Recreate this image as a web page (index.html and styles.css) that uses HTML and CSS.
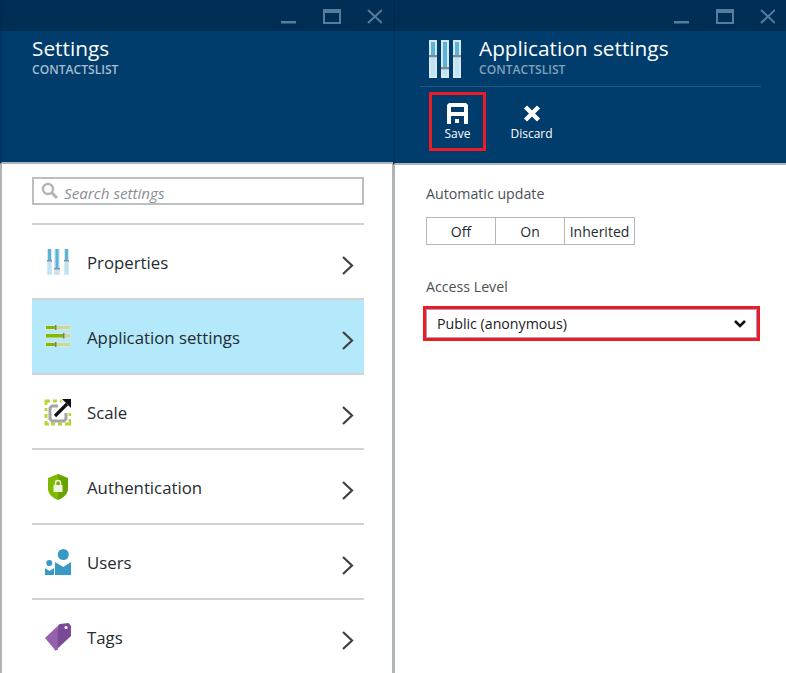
FILE: index.html
```html
<!DOCTYPE html>
<html lang="en">
<head>
  <meta charset="UTF-8" />
  <title>Settings</title>
  <link rel="stylesheet" href="styles.css">
</head>
<body>

<div class="blades">

  <!-- settings blade -->
  <section class="blade blade-left">
    <div class="titlebar">
      <svg class="winctl" width="101" height="17" viewBox="0 0 101 17">
        <rect x="0" y="13" width="15" height="2.500" fill="#587c9b"/>
        <path d="M43 2h16v13h-16z" fill="none" stroke="#587c9b" stroke-width="2"/>
        <rect x="42" y="1" width="18" height="4" fill="#587c9b"/>
        <path d="M87 2l14 13M101 2l-14 13" fill="none" stroke="#587c9b" stroke-width="2"/>
      </svg>
    </div>
    <header class="blade-head">
      <div class="head-text">
        <h1>Settings</h1>
        <p>CONTACTSLIST</p>
      </div>
    </header>
    <div class="blade-body">
      <div class="search">
        <svg width="18" height="18" viewBox="0 0 18 18">
          <circle cx="7" cy="7" r="5" fill="none" stroke="#b4b4b4" stroke-width="2.400"/>
          <path d="M10.500 10.500l5.500 5.500" stroke="#b4b4b4" stroke-width="3"/>
        </svg>
        <span>Search settings</span>
      </div>
      <ul class="menu">
        <li class="menu-item">
          <svg class="menu-icon" width="28" height="28" viewBox="0 0 28 28">
            <rect x="4" y="1" width="5" height="26" fill="#d6e8f0"/>
            <rect x="11" y="1" width="6" height="26" fill="#d6e8f0"/>
            <rect x="21" y="1" width="5" height="26" fill="#d6e8f0"/>
            <rect x="5" y="14" width="3" height="12" fill="#bfe3f2"/>
            <rect x="12.500" y="22" width="3" height="4" fill="#bfe3f2"/>
            <rect x="22" y="14" width="3" height="12" fill="#bfe3f2"/>
            <rect x="5" y="1" width="3" height="11" fill="#59b4d9"/>
            <rect x="12.500" y="1" width="3" height="19" fill="#59b4d9"/>
            <rect x="22" y="1" width="3" height="11" fill="#59b4d9"/>
            <rect x="4" y="12" width="5" height="1.500" fill="#8a8f94"/>
            <rect x="11" y="20" width="6" height="1.500" fill="#8a8f94"/>
            <rect x="21" y="12" width="5" height="1.500" fill="#8a8f94"/>
          </svg>
          <span>Properties</span>
          <svg class="chev" width="14" height="21" viewBox="0 0 14 21"><path d="M2 2l9 8.500-9 8.500" fill="none" stroke="#404040" stroke-width="2.200"/></svg>
        </li>
        <li class="menu-item selected">
          <svg class="menu-icon" width="28" height="28" viewBox="0 0 28 28">
            <rect x="2" y="2" width="26" height="5" fill="#dde3d6"/>
            <rect x="2" y="10" width="26" height="5.500" fill="#dde3d6"/>
            <rect x="2" y="19" width="26" height="5" fill="#dde3d6"/>
            <rect x="13" y="3" width="14" height="3" fill="#c5dc98"/>
            <rect x="22" y="11" width="5" height="3.500" fill="#c5dc98"/>
            <rect x="13" y="20" width="14" height="3" fill="#c5dc98"/>
            <rect x="3" y="3" width="9" height="3" fill="#7fba00"/>
            <rect x="3" y="11" width="17" height="3.500" fill="#7fba00"/>
            <rect x="3" y="20" width="9" height="3" fill="#7fba00"/>
            <rect x="12" y="2" width="1.500" height="5" fill="#7a7a7a"/>
            <rect x="20" y="10" width="1.500" height="5.500" fill="#7a7a7a"/>
            <rect x="12" y="19" width="1.500" height="5" fill="#7a7a7a"/>
          </svg>
          <span>Application settings</span>
          <svg class="chev" width="14" height="21" viewBox="0 0 14 21"><path d="M2 2l9 8.500-9 8.500" fill="none" stroke="#404040" stroke-width="2.200"/></svg>
        </li>
        <li class="menu-item">
          <svg class="menu-icon" width="28" height="28" viewBox="0 0 28 28">
            <path d="M3 7v-4h4M10 3h4M17 3h1M27 21v5h-5M19 26h-4M12 26h-4M6 26h-3v-3M3 20v-4M3 13v-3M27 18v-3" fill="none" stroke="#b8d432" stroke-width="2.800"/>
            <path d="M15 8h-6l-2 2v11l2 2h12l2-2v-6" fill="none" stroke="#a5a5a5" stroke-width="3"/>
            <path d="M12 18l12-12" stroke="#111" stroke-width="3.200"/>
            <path d="M19 1h10v10z" fill="#111"/>
          </svg>
          <span>Scale</span>
          <svg class="chev" width="14" height="21" viewBox="0 0 14 21"><path d="M2 2l9 8.500-9 8.500" fill="none" stroke="#404040" stroke-width="2.200"/></svg>
        </li>
        <li class="menu-item">
          <svg class="menu-icon" width="28" height="28" viewBox="0 0 28 28">
            <path d="M15 1l10 4v11c0 5-5 9-10 11z" fill="#68a300"/>
            <path d="M15 1l-10 4v11c0 5 5 9 10 11z" fill="#7fba00"/>
            <rect x="10.500" y="12" width="9" height="7" fill="#f0f5e0"/>
            <path d="M12.500 12v-2a2.500 2.500 0 0 1 5 0v2" fill="none" stroke="#f0f5e0" stroke-width="1.500"/>
          </svg>
          <span>Authentication</span>
          <svg class="chev" width="14" height="21" viewBox="0 0 14 21"><path d="M2 2l9 8.500-9 8.500" fill="none" stroke="#404040" stroke-width="2.200"/></svg>
        </li>
        <li class="menu-item">
          <svg class="menu-icon" width="28" height="28" viewBox="0 0 28 28">
            <circle cx="20.300" cy="6.500" r="5.500" fill="#3999c6"/>
            <path d="M12 14l8.300 5 7.700-5v13h-16z" fill="#3999c6"/>
            <circle cx="6.300" cy="15" r="3" fill="#3999c6"/>
            <path d="M2 20l4.300 3 4.700-3v7h-9z" fill="#3999c6"/>
          </svg>
          <span>Users</span>
          <svg class="chev" width="14" height="21" viewBox="0 0 14 21"><path d="M2 2l9 8.500-9 8.500" fill="none" stroke="#404040" stroke-width="2.200"/></svg>
        </li>
        <li class="menu-item">
          <svg class="menu-icon" width="28" height="28" viewBox="0 0 28 28">
            <path d="M14.700 3l2-2 9-1 2.300 3v10l-15.500 14.500-1-1z" fill="#7a4a96"/>
            <path d="M2 15l12.700-12v24l-2.200 .5z" fill="#9561ac"/>
            <circle cx="23" cy="4.500" r="1.500" fill="#fff"/>
          </svg>
          <span>Tags</span>
          <svg class="chev" width="14" height="21" viewBox="0 0 14 21"><path d="M2 2l9 8.500-9 8.500" fill="none" stroke="#404040" stroke-width="2.200"/></svg>
        </li>
      </ul>
    </div>
  </section>

  <!-- application settings blade -->
  <section class="blade blade-right">
    <div class="titlebar">
      <svg class="winctl" width="101" height="17" viewBox="0 0 101 17">
        <rect x="0" y="13" width="15" height="2.500" fill="#587c9b"/>
        <path d="M43 2h16v13h-16z" fill="none" stroke="#587c9b" stroke-width="2"/>
        <rect x="42" y="1" width="18" height="4" fill="#587c9b"/>
        <path d="M87 2l14 13M101 2l-14 13" fill="none" stroke="#587c9b" stroke-width="2"/>
      </svg>
    </div>
    <header class="blade-head head-app">
      <div class="head-row">
        <svg class="head-icon" width="33" height="39" viewBox="0 0 33 39">
          <rect x="0" y="0" width="8" height="38" fill="#d6e8f0"/>
          <rect x="12" y="0" width="8" height="38" fill="#d6e8f0"/>
          <rect x="24" y="0" width="8" height="38" fill="#d6e8f0"/>
          <rect x="2" y="17" width="4" height="19" fill="#bfe3f2"/>
          <rect x="14" y="29" width="4" height="7" fill="#bfe3f2"/>
          <rect x="26" y="17" width="4" height="19" fill="#bfe3f2"/>
          <rect x="2" y="2" width="4" height="13" fill="#59b4d9"/>
          <rect x="14" y="2" width="4" height="25" fill="#59b4d9"/>
          <rect x="26" y="2" width="4" height="13" fill="#59b4d9"/>
          <rect x="0" y="15" width="8" height="2.300" fill="#7f8a92"/>
          <rect x="12" y="27" width="8" height="2.300" fill="#7f8a92"/>
          <rect x="24" y="15" width="8" height="2.300" fill="#7f8a92"/>
        </svg>
        <div class="head-text">
          <h1>Application settings</h1>
          <p>CONTACTSLIST</p>
        </div>
      </div>
      <div class="commands">
        <div class="command command-marked">
          <svg width="21" height="21" viewBox="0 0 21 21">
            <path fill-rule="evenodd" fill="#fff" d="M2 0h17l2 2v19h-4v-8h-13v8h-4v-19zM4 4v5h13v-5z"/>
            <rect x="8" y="16" width="4" height="4" fill="#fff"/>
          </svg>
          <span>Save</span>
        </div>
        <div class="command">
          <svg width="18" height="18" viewBox="0 0 18 18"><path d="M2.500 2.500l13 13M15.500 2.500l-13 13" stroke="#fff" stroke-width="4.400"/></svg>
          <span>Discard</span>
        </div>
      </div>
    </header>
    <div class="blade-body body-app">
      <label class="field-label">Automatic update</label>
      <div class="toggle">
        <div class="toggle-opt opt-off">Off</div>
        <div class="toggle-opt opt-on">On</div>
        <div class="toggle-opt opt-inh">Inherited</div>
      </div>
      <label class="field-label label-access">Access Level</label>
      <div class="dropdown-mark">
        <div class="dropdown">
          <span>Public (anonymous)</span>
          <svg width="14" height="10" viewBox="0 0 14 10"><path d="M2 2l5 5 5-5" fill="none" stroke="#111" stroke-width="2.600"/></svg>
        </div>
      </div>
    </div>
  </section>

</div>

</body>
</html>
```

FILE: styles.css
```css
html, body {
  margin: 0;
  height: 100%;
  overflow: hidden;
  background: #fff;
}
body {
  font-family: "Open Sans", "Noto Sans", sans-serif;
  color: #252b30;
}
.blades {
  display: flex;
  height: 673px;
}
.blade {
  display: flex;
  flex-direction: column;
  box-sizing: border-box;
  width: 393px;
}
.titlebar {
  display: flex;
  justify-content: flex-end;
  box-sizing: border-box;
  height: 31px;
  padding: 8px 11px 0 0;
  background: #002e55;
  border-left: 2px solid #002a4e;
}
.winctl {
  display: block;
}
.blade-head {
  box-sizing: border-box;
  height: 134px;
  padding: 4px 0 0 30px;
  background: #003c6c;
  border-left: 2px solid #003461;
  border-bottom: 2px solid #aeb4b8;
}
.head-text h1 {
  margin: 0;
  font-size: 20.800px;
  font-weight: 400;
  line-height: 26px;
  color: #fff;
}
.head-text p {
  margin: 2px 0 0;
  font-size: 12.100px;
  font-weight: 600;
  line-height: 14px;
  color: #a9bccc;
}
.head-app {
  padding: 5px 25px 0 25px;
}
.head-row {
  display: flex;
  gap: 17px;
  height: 51px;
  border-bottom: 1px solid #26577f;
  margin-bottom: 5px;
  padding: 4px 0 0 9px;
  box-sizing: border-box;
}
.head-app .head-text {
  margin-top: -5px;
}
.head-app .head-text p {
  color: #85a0b7;
}
.head-icon {
  display: block;
}
.commands {
  display: flex;
  gap: 17px;
  padding-left: 9px;
}
.command {
  display: flex;
  flex-direction: column;
  align-items: center;
  box-sizing: border-box;
  width: 57px;
  height: 59px;
  padding-top: 11px;
  color: #fff;
  font-size: 12px;
  line-height: 16px;
}
.command svg {
  height: 21px;
  margin-bottom: 2px;
}
.command-marked {
  border: 3px solid #ed1c24;
  padding-top: 8px;
}
.blade-body {
  flex: 1;
  padding: 13px 28px 0 30px;
  border-left: 2px solid #aeb4b8;
  border-right: 1px solid #aeb4b8;
}
.search {
  display: flex;
  align-items: center;
  gap: 5px;
  box-sizing: border-box;
  height: 28px;
  padding-left: 7px;
  border: 2px solid #bcbfc2;
  font-size: 15.200px;
  font-style: italic;
  color: #8a8f94;
}
.search span {
  margin-top: 4px;
}
.menu {
  list-style: none;
  margin: 18px 0 0;
  padding: 0;
}
.menu-item {
  display: flex;
  align-items: center;
  box-sizing: border-box;
  height: 75px;
  padding: 0 9px 0 11px;
  border-top: 2px solid #d2d2d2;
  font-size: 16.800px;
}
.menu-item.selected {
  background: #b3e9fa;
}
.menu-icon {
  flex: none;
  margin-right: 16px;
}
.menu-item span {
  flex: 1;
  margin-top: 2px;
}
.chev {
  flex: none;
  margin-top: 7px;
}
.body-app {
  padding: 19px 26px 0 31px;
  border-right: none;
}
.field-label {
  display: block;
  font-size: 14.200px;
  line-height: 20px;
  color: #4b5056;
}
.toggle {
  display: flex;
  width: 209px;
  height: 28px;
  margin-top: 13px;
  box-sizing: border-box;
  border: 1px solid #b4b8bb;
  font-size: 14px;
}
.toggle-opt {
  display: flex;
  align-items: center;
  justify-content: center;
  box-sizing: border-box;
  border-right: 1px solid #b4b8bb;
}
.opt-off, .opt-on {
  width: 69px;
}
.opt-inh {
  flex: 1;
  border-right: none;
}
.label-access {
  margin-top: 32px;
}
.dropdown-mark {
  margin: 9px 0 0 -3px;
  width: 337px;
  box-sizing: border-box;
  border: 3px solid #ed1c24;
}
.dropdown {
  display: flex;
  align-items: center;
  justify-content: space-between;
  box-sizing: border-box;
  height: 29px;
  padding: 0 9px 0 10px;
  border: 1px solid #a99cc8;
  font-size: 14.200px;
  color: #1d2125;
}
```
